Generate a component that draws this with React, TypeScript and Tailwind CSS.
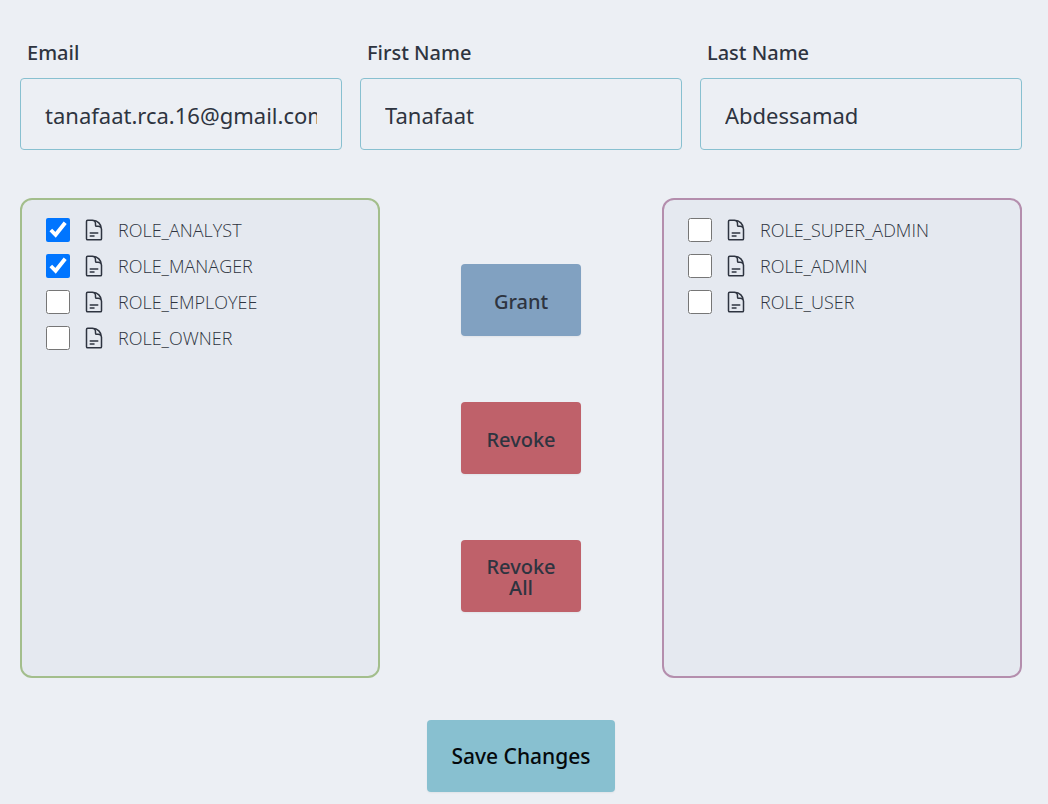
import { useState } from "react";
import { HiOutlineDocumentText } from "react-icons/hi2";

type Role = { name: string; checked: boolean };

const assignedRoles: Role[] = [
  { name: "ROLE_ANALYST", checked: true },
  { name: "ROLE_MANAGER", checked: true },
  { name: "ROLE_EMPLOYEE", checked: false },
  { name: "ROLE_OWNER", checked: false },
];

const availableRoles: Role[] = [
  { name: "ROLE_SUPER_ADMIN", checked: false },
  { name: "ROLE_ADMIN", checked: false },
  { name: "ROLE_USER", checked: false },
];

function Field({ id, label, type = "text", initial }: { id: string; label: string; type?: string; initial: string }) {
  const [value, setValue] = useState(initial);
  return (
    <div className="flex min-w-0 flex-col">
      <label htmlFor={id} className="px-[7px] pb-[11px] text-xl leading-7 font-medium">
        {label}
      </label>
      <input
        id={id}
        type={type}
        value={value}
        onChange={(e) => setValue(e.target.value)}
        className="h-18 w-full rounded border border-[#88c0d0] bg-transparent px-6 pt-0.5 text-[22px] outline-none"
      />
    </div>
  );
}

function RoleList({ roles, className }: { roles: Role[]; className: string }) {
  return (
    <ul className={"flex h-120 w-90 flex-col gap-3 rounded-xl border-2 bg-[#e5e9f0] px-6 py-[18px] " + className}>
      {roles.map((role) => (
        <li key={role.name}>
          <label className="flex items-center gap-3">
            <input type="checkbox" defaultChecked={role.checked} className="size-6" />
            <HiOutlineDocumentText className="size-6" aria-hidden="true" />
            <span className="font-['Open_Sans','Noto_Sans',sans-serif] text-lg leading-6 font-light">{role.name}</span>
          </label>
        </li>
      ))}
    </ul>
  );
}

function ActionButton({ label, className }: { label: string; className: string }) {
  return (
    <button type="button" className={"h-18 w-30 rounded px-6 pt-0.5 text-xl leading-[21px] font-medium shadow-xs " + className}>
      {label}
    </button>
  );
}

export default function App() {
  return (
    <main className="min-h-screen bg-[#eceff4] pt-[39px] pr-[26px] pb-3 pl-5 font-['Noto_Sans','Open_Sans',sans-serif] text-[#2e3440]">
      <form onSubmit={(e) => e.preventDefault()}>
        <div className="grid grid-cols-3 gap-[18px]">
          <Field id="email" label="Email" type="email" initial="tanafaat.rca.16@gmail.com" />
          <Field id="first-name" label="First Name" initial="Tanafaat" />
          <Field id="last-name" label="Last Name" initial="Abdessamad" />
        </div>

        <div className="mt-12 flex justify-between">
          <RoleList roles={assignedRoles} className="border-[#a3be8c]" />
          <div className="flex flex-col justify-evenly">
            <ActionButton label="Grant" className="bg-[#81a1c1]" />
            <ActionButton label="Revoke" className="bg-[#bf616a]" />
            <ActionButton label="Revoke All" className="bg-[#bf616a]" />
          </div>
          <RoleList roles={availableRoles} className="border-[#b48ead]" />
        </div>

        <div className="mt-[42px] flex justify-center">
          <button type="submit" className="h-18 rounded bg-[#88c0d0] px-6 pt-0.5 text-[21px] font-medium text-[#05090c] shadow-xs">
            Save Changes
          </button>
        </div>
      </form>
    </main>
  );
}
